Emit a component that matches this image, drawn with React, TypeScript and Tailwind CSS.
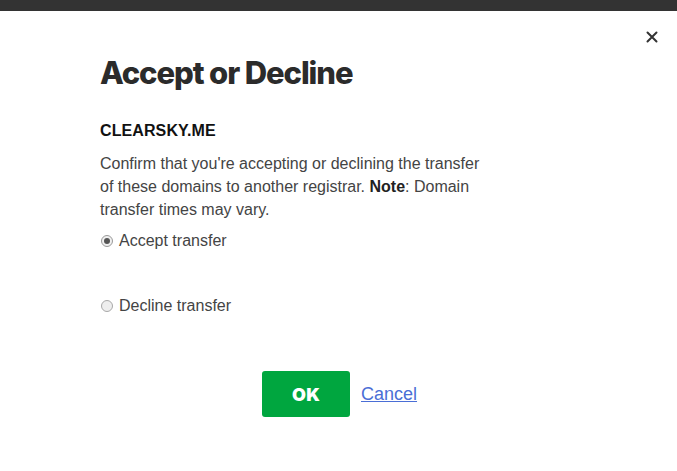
import React from "react";

export default function App() {
  return (
    <div className="w-[677px] h-[471px] bg-white relative overflow-hidden" style={{ fontFamily: "'Liberation Sans', Arial, sans-serif" }}>
      <div className="h-[11px] bg-[#333333]" />
      <button className="absolute left-[644px] top-[29px] w-[16px] h-[16px] flex items-center justify-center text-[#333]">
        <svg width="12" height="12" viewBox="0 0 12 12">
          <path d="M1.5 1.5 L10.5 10.5 M10.5 1.5 L1.5 10.5" stroke="#333" strokeWidth="2" strokeLinecap="round" />
        </svg>
      </button>
      <div className="pl-[100px] pt-[43px]">
        <h1 className="text-[31px] leading-[38px] font-extrabold text-[#2b2b2b] tracking-[-1.1px]" style={{ fontFamily: "Inter, 'Liberation Sans', sans-serif" }}>
          Accept or Decline
        </h1>
        <div className="mt-[29px] text-[16px] leading-[20px] font-bold text-[#111] tracking-[0.1px]">CLEARSKY.ME</div>
        <p className="mt-[11px] w-[392px] text-[16px] leading-[23px] text-[#444]">
          Confirm that you're accepting or declining the transfer of these domains to another registrar. <b className="text-[#222]">Note</b>: Domain transfer times may vary.
        </p>
        <label className="mt-[9px] flex items-center h-[22px] text-[16px] text-[#444]">
          <span className="w-[12px] h-[12px] rounded-full border border-[#9a9a9a] bg-[#f0f0f0] flex items-center justify-center ml-[1px] mr-[6px]">
            <span className="w-[6px] h-[6px] rounded-full bg-[#555]" />
          </span>
          Accept transfer
        </label>
        <label className="mt-[43px] flex items-center h-[22px] text-[16px] text-[#444]">
          <span className="w-[12px] h-[12px] rounded-full border border-[#a8a8a8] bg-[#eeeeee] ml-[1px] mr-[6px]" />
          Decline transfer
        </label>
        <div className="mt-[54px] flex items-center pl-[162px]">
          <button className="w-[88px] h-[46px] rounded-[3px] bg-[#00a63f] text-white text-[18px] font-black tracking-[0.3px]" style={{ fontFamily: "Inter, 'Liberation Sans', sans-serif" }}>
            OK
          </button>
          <a className="ml-[11px] text-[18px] text-[#4a6ed6] underline">Cancel</a>
        </div>
      </div>
    </div>
  );
}
